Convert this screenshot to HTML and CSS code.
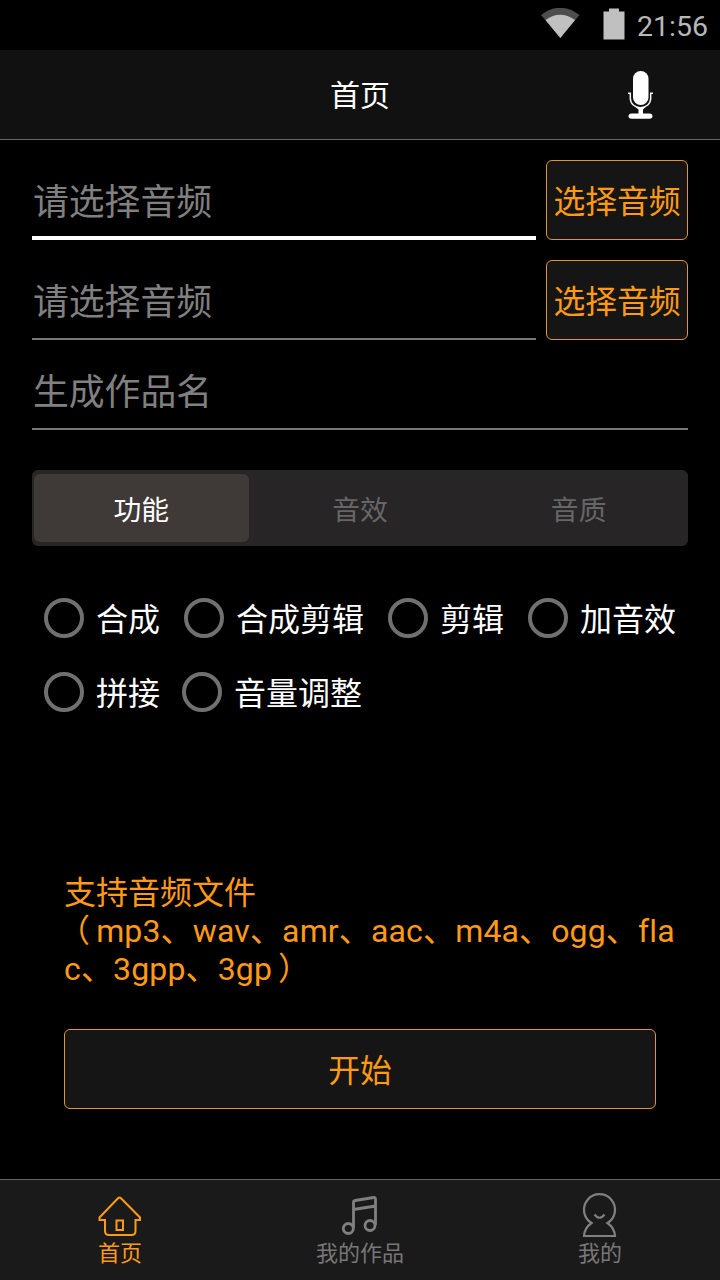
FILE: index.html
```html
<!DOCTYPE html>
<html lang="zh-CN">
<head>
    <meta charset="utf-8">
    <title>首页</title>
    <link rel="stylesheet" href="styles.css">
</head>
<body>
    <div class="statusbar">
        <svg class="wifi" width="40" height="32" viewBox="0 0 40 32">
            <path fill="#4d4d4d" d="M1 7 Q20 -7.500 39.500 7 L20.300 30 Z"/>
            <path fill="#c0c0c0" d="M5.500 12 Q20 1.500 35 12 L20.300 30 Z"/>
        </svg>
        <svg class="battery" width="22" height="32" viewBox="0 0 22 32">
            <path fill="#c0c0c0" d="M6 0.500h10v3h5.500v28H0.500v-28H6z"/>
        </svg>
        <span class="clock">21:56</span>
    </div>

    <header>
        <h1>首页</h1>
        <svg class="mic" width="28" height="50" viewBox="0 0 28 50">
            <rect x="6" y="1" width="15.500" height="34" rx="7.700" fill="#fff"/>
            <path d="M1 23.300h2.300v5c0 5.500 4.500 9.400 10.200 9.400s10.200-3.900 10.200-9.400v-5h2.300" fill="none" stroke="#f4f4f4" stroke-width="1.500"/>
            <path fill="#fff" d="M8.500 37h10l-2.500 2.500v4h6.500q3 .3 3 2.700t-3 2.600h-18q-3-.2-3-2.600t3-2.700h7v-4z"/>
        </svg>
    </header>

    <main>
        <div class="row">
            <div class="field focus">请选择音频</div>
            <button class="bt">选择音频</button>
        </div>
        <div class="row">
            <div class="field">请选择音频</div>
            <button class="bt">选择音频</button>
        </div>
        <div class="row name">
            <div class="field">生成作品名</div>
        </div>

        <div class="segment">
            <div class="on">功能</div>
            <div>音效</div>
            <div>音质</div>
        </div>

        <div class="options">
            <div class="line">
                <div class="radio"><i></i><span>合成</span></div>
                <div class="radio"><i></i><span>合成剪辑</span></div>
                <div class="radio"><i></i><span>剪辑</span></div>
                <div class="radio"><i></i><span>加音效</span></div>
            </div>
            <div class="line second">
                <div class="radio"><i></i><span>拼接</span></div>
                <div class="radio"><i></i><span>音量调整</span></div>
            </div>
        </div>

        <p class="hint">支持音频文件<br><span class="formats"><span class="open">（</span>mp3、wav、amr、aac、m4a、ogg、fla<br>c、3gpp、3gp<span class="end">）</span></span></p>
        <button class="bt start">开始</button>
    </main>

    <nav>
        <div class="tab active">
            <svg width="44" height="46" viewBox="0 0 44 46">
                <path d="M20 5.200q1.500-1.400 3 0L42 24.500V27H37.500V38q0 4-4 4H11q-4 0-4-4V27H1.500V24.500Z"/>
                <path d="M18.500 27.500h6.500v9.500h-6.500z"/>
            </svg>
            <span>首页</span>
        </div>
        <div class="tab">
            <svg width="44" height="46" viewBox="0 0 44 46">
                <g stroke-width="2.800">
                    <circle cx="10.300" cy="35.500" r="5"/>
                    <circle cx="32" cy="32.500" r="5"/>
                    <path d="M15.500 35V9.500q0-1.700 1.700-2L35.500 4.500q2-.2 2 1.800V32M15.500 16.500L37.500 13"/>
                </g>
            </svg>
            <span>我的作品</span>
        </div>
        <div class="tab">
            <svg width="44" height="46" viewBox="0 0 44 46">
                <path d="M13.500 30A15.500 15.500 0 1 1 29.500 30Q36.500 35 37 43H6Q6.500 35 13.500 30Z"/>
                <path d="M16.500 21.500q5 6.500 10 0"/>
            </svg>
            <span>我的</span>
        </div>
    </nav>
</body>
</html>
```
FILE: styles.css
```css
* {
    box-sizing: border-box;
}

body {
    margin: 0;
    width: 720px;
    height: 1280px;
    display: flex;
    flex-direction: column;
    overflow: hidden;
    background: #000;
    color: #fff;
    font-family: Roboto, "Noto Sans CJK SC", sans-serif;
}

svg {
    display: block;
    fill: none;
}

.statusbar {
    height: 50px;
    display: flex;
    justify-content: flex-end;
    padding: 8px 12px 0 0;
}
.wifi { margin-right: 23px; }
.battery { margin-right: 12px; }
.clock {
    width: 71px;
    font-size: 28.5px;
    line-height: 37px;
    color: #b8b8b8;
}

header {
    height: 90px;
    display: grid;
    grid-template-columns: 1fr auto 1fr;
    align-items: center;
    background: #111;
    border-bottom: 1px solid #666;
}
header h1 {
    grid-column: 2;
    margin: 0;
    padding-top: 3px;
    font-size: 30px;
    font-weight: normal;
    line-height: 40px;
}
.mic {
    justify-self: end;
    margin: 1px 65px 0 0;
}

main {
    flex: 1;
    padding: 20px 32px 0;
}

.row {
    display: flex;
    gap: 10px;
    height: 80px;
    margin-bottom: 20px;
}
.row.name {
    height: 70px;
    margin-bottom: 40px;
}
.field {
    flex: 1;
    padding: 16px 0 0 1px;
    font-size: 35.8px;
    line-height: 54px;
    color: #808080;
    border-bottom: 2px solid #777;
}
.focus { border-bottom: 4px solid #fff; }
.name .field { padding-top: 6px; }

.bt {
    width: 142px;
    padding: 4px 0 0;
    font-family: inherit;
    font-size: 31.8px;
    line-height: 48px;
    color: #ff9a14;
    background: #151515;
    border: 1px solid #e09535;
    border-radius: 6px;
}

.segment {
    height: 76px;
    display: grid;
    grid-template-columns: 1fr 1fr 1fr;
    grid-template-rows: 68px;
    column-gap: 4px;
    padding: 4px 2px;
    background: #272526;
    border-radius: 6px;
    font-size: 27.8px;
    line-height: 74px;
    text-align: center;
    color: #666;
}
.segment .on {
    background: #3f3a38;
    border-radius: 6px;
    color: #fff;
}

.options {
    padding: 52px 0 0 12px;
    font-size: 32px;
    line-height: 40px;
}
.line {
    display: flex;
    gap: 24px;
    height: 40px;
    margin-bottom: 34px;
}
.second { gap: 22px; }
.radio {
    display: flex;
    gap: 12px;
}
.radio i {
    width: 40px;
    height: 40px;
    border: 4px solid #707070;
    border-radius: 50%;
}
.radio span { padding-top: 2px; }

.hint {
    margin: 162px 0 41px;
    padding-left: 32px;
    font-size: 32px;
    line-height: 38px;
    color: #ff9a14;
    white-space: nowrap;
}
.formats {
    letter-spacing: 0.15px;
    font-variant-ligatures: none;
}
/* pull the full-width brackets away from the latin text */
.open { margin: 0 6px 0 -6px; }
.end { margin-left: 6px; }
.start {
    display: block;
    width: 592px;
    height: 80px;
    margin: 0 auto;
}

nav {
    height: 101px;
    display: flex;
    background: #1a1a1a;
    border-top: 1px solid #666;
}
.tab {
    flex: 1;
    display: flex;
    flex-direction: column;
    align-items: center;
    padding-top: 13px;
    font-size: 22px;
    line-height: 30px;
    color: #777;
}
.tab svg {
    stroke: #808080;
    stroke-width: 2.200;
}
.tab.active { color: #ff9a14; }
.tab.active svg {
    stroke: #ff9a14;
    stroke-width: 2;
}
```
